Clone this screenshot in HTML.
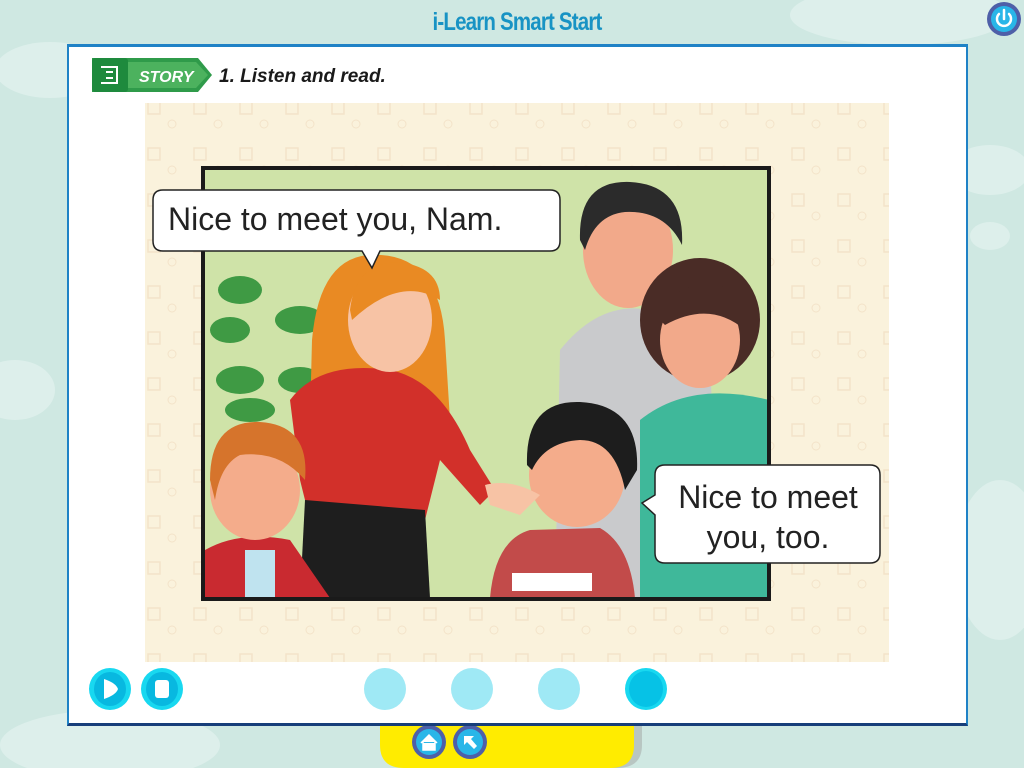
<!DOCTYPE html>
<html><head><meta charset="utf-8"><style>
html,body{margin:0;padding:0;width:1024px;height:768px;overflow:hidden;background:#cfe8e2;font-family:"Liberation Sans",sans-serif}
.abs{position:absolute}
</style></head><body>
<div class="abs" style="left:0;top:0;width:1024px;height:768px">
<svg width="1024" height="768" class="abs" style="left:0;top:0">
<ellipse cx="50" cy="70" rx="55" ry="28" fill="#ddefeb"/>
<ellipse cx="15" cy="390" rx="40" ry="30" fill="#ddefeb"/>
<ellipse cx="990" cy="170" rx="40" ry="25" fill="#ddefeb"/>
<ellipse cx="990" cy="236" rx="20" ry="14" fill="#ddefeb"/>
<ellipse cx="1000" cy="560" rx="45" ry="80" fill="#ddefeb"/>
<ellipse cx="900" cy="15" rx="110" ry="30" fill="#ddefeb"/>
<ellipse cx="110" cy="745" rx="110" ry="35" fill="#ddefeb"/>
<!-- yellow tab -->
<path d="M388 718 L642 718 L642 745 Q642 768 617 768 L412 768 Q388 768 388 745Z" fill="#b8c6c2"/>
<path d="M380 718 L634 718 L634 745 Q634 768 610 768 L404 768 Q380 768 380 745Z" fill="#ffec00"/>
<circle cx="429" cy="742" r="17" fill="#4e5fa8"/><circle cx="429" cy="742" r="13" fill="#29b6e8"/>
<path d="M421 743 L429 735 L437 743 M423 742 V750 H435 V742" fill="#fff" stroke="#fff" stroke-width="1.5"/>
<circle cx="470" cy="742" r="17" fill="#4e5fa8"/><circle cx="470" cy="742" r="13" fill="#29b6e8"/>
<path d="M464 736 L474 736 L471 739 L477 746 L474 749 L467 742 L464 745Z" fill="#fff"/>
<!-- power -->
<circle cx="1004" cy="19" r="17" fill="#4e5fa8"/><circle cx="1004" cy="19" r="13" fill="#29b6e8"/>
<path d="M999 14 A7 7 0 1 0 1009 14" fill="none" stroke="#fff" stroke-width="2.5" stroke-linecap="round"/>
<line x1="1004" y1="10" x2="1004" y2="19" stroke="#fff" stroke-width="2.5" stroke-linecap="round"/>
</svg>
<div class="abs" style="left:0;top:8px;width:1034px;text-align:center;font-weight:bold;font-size:25px;color:#1893c4;letter-spacing:-1px;transform:scaleX(0.82)">i-Learn Smart Start</div>
<!-- panel -->
<div class="abs" style="left:67px;top:44px;width:897px;height:676px;background:#fff;border-top:3px solid #1f82c6;border-left:2px solid #1f82c6;border-right:2px solid #1f82c6;border-bottom:3px solid #173e7a"></div>
<svg width="1024" height="768" class="abs" style="left:0;top:0">
<defs><pattern id="pt" width="46" height="46" patternUnits="userSpaceOnUse"><rect x="10" y="10" width="12" height="12" fill="none" stroke="#f3e3c9" stroke-width="1.5"/><circle cx="34" cy="32" r="4" fill="none" stroke="#f3e3c9"/></pattern></defs>
<!-- story badge -->
<path d="M92 58 H198 L212 75 L198 92 H92 Z" fill="#2f9b4a"/>
<path d="M128 62 H196 L208 75 L196 88 H128 Z" fill="#4cb25e"/>
<rect x="92" y="58" width="36" height="34" rx="3" fill="#1e8a3d"/>
<path d="M101 67 H117 V83 H101 M106 72 H113 M106 78 H113" fill="none" stroke="#fff" stroke-width="2"/>
<text x="139" y="82" font-family="Liberation Sans" font-weight="bold" font-style="italic" font-size="16" fill="#fff">STORY</text>
<text x="219" y="82" font-family="Liberation Sans" font-weight="bold" font-style="italic" font-size="19" fill="#1a1a1a">1. Listen and read.</text>
<!-- image bg -->
<rect x="145" y="103" width="744" height="559" fill="#faf2dc"/>
<rect x="145" y="103" width="744" height="559" fill="url(#pt)"/>
<!-- comic -->
<rect x="203" y="168" width="566" height="431" fill="#cfe3a8"/>
<g fill="#3f9a44"><ellipse cx="240" cy="290" rx="22" ry="14"/><ellipse cx="230" cy="330" rx="20" ry="13"/><ellipse cx="300" cy="320" rx="25" ry="14"/><ellipse cx="240" cy="380" rx="24" ry="14"/><ellipse cx="300" cy="380" rx="22" ry="13"/><ellipse cx="250" cy="410" rx="25" ry="12"/></g>
<path d="M555 598 L560 350 Q600 300 650 310 Q700 320 710 360 L720 598Z" fill="#c9cacc"/>
<ellipse cx="628" cy="250" rx="45" ry="58" fill="#f2a98a"/>
<path d="M580 240 Q578 180 630 182 Q685 185 682 245 Q665 210 625 212 Q595 215 585 250Z" fill="#2b2b2b"/>
<path d="M640 598 L640 420 Q690 380 769 400 V598Z" fill="#3fb89a"/>
<ellipse cx="700" cy="320" rx="60" ry="62" fill="#4a2c26"/>
<ellipse cx="700" cy="340" rx="40" ry="48" fill="#f2a98a"/>
<path d="M660 320 Q670 280 720 285 Q750 300 745 330 Q710 300 665 325Z" fill="#4a2c26"/>
<path d="M312 340 Q320 250 380 255 Q440 258 445 340 L450 420 L310 420Z" fill="#e98a23"/>
<path d="M290 400 Q320 360 390 370 Q440 380 470 450 L495 490 L480 505 L440 460 L425 520 L310 520 L300 480 Z" fill="#d2302a"/>
<path d="M305 500 L425 510 L430 598 L300 598Z" fill="#1e1e1e"/>
<ellipse cx="390" cy="320" rx="42" ry="52" fill="#f7c3a5"/>
<path d="M350 310 Q355 265 395 262 Q440 265 440 300 Q400 275 352 320Z" fill="#e98a23"/>
<path d="M205 598 L205 550 Q240 530 290 540 L330 598Z" fill="#c92a30"/>
<rect x="245" y="550" width="30" height="48" fill="#bfe3ef"/>
<ellipse cx="255" cy="490" rx="45" ry="50" fill="#f4ac8b"/>
<path d="M210 480 Q210 420 260 422 Q310 425 305 480 Q280 450 240 455 Q220 465 215 500Z" fill="#d6742c"/>
<path d="M490 598 Q495 540 530 530 L600 528 Q630 545 635 598Z" fill="#c24b4a"/>
<rect x="512" y="573" width="80" height="18" fill="#fff"/>
<ellipse cx="577" cy="475" rx="48" ry="52" fill="#f4ac8b"/>
<path d="M527 465 Q525 400 580 402 Q640 405 637 470 L625 490 Q615 440 580 440 Q545 442 532 470Z" fill="#1d1d1d"/>
<path d="M485 485 Q510 478 540 495 L520 515 L490 505Z" fill="#f7c3a5"/>
<rect x="203" y="168" width="566" height="431" fill="none" stroke="#1a1a1a" stroke-width="4"/>
<path d="M163 190 H550 Q560 190 560 200 V241 Q560 251 550 251 H380 L372 268 L362 251 H163 Q153 251 153 241 V200 Q153 190 163 190Z" fill="#fff" stroke="#222" stroke-width="1.5"/>
<text x="168" y="230" font-family="Liberation Sans" font-size="32" fill="#222">Nice to meet you, Nam.</text>
<path d="M665 465 H870 Q880 465 880 475 V553 Q880 563 870 563 H665 Q655 563 655 553 V515 L642 503 L655 495 V475 Q655 465 665 465Z" fill="#fff" stroke="#222" stroke-width="1.5"/>
<text x="768" y="508" text-anchor="middle" font-family="Liberation Sans" font-size="32" fill="#222">Nice to meet</text>
<text x="768" y="548" text-anchor="middle" font-family="Liberation Sans" font-size="32" fill="#222">you, too.</text>
<ellipse cx="110" cy="689" rx="21" ry="21" fill="#18d8f0"/><ellipse cx="110" cy="689" rx="16" ry="17" fill="#08b8e0"/>
<path d="M104 679 Q116 683 118 689 Q116 695 104 699Z" fill="#fff"/>
<ellipse cx="162" cy="689" rx="21" ry="21" fill="#18d8f0"/><ellipse cx="162" cy="689" rx="16" ry="17" fill="#08b8e0"/>
<rect x="155" y="680" width="14" height="18" rx="3" fill="#fff"/>
<ellipse cx="385" cy="689" rx="21" ry="21" fill="#9fe9f5"/>
<ellipse cx="472" cy="689" rx="21" ry="21" fill="#9fe9f5"/>
<ellipse cx="559" cy="689" rx="21" ry="21" fill="#9fe9f5"/>
<ellipse cx="646" cy="689" rx="21" ry="21" fill="#18d8f0"/><ellipse cx="646" cy="689" rx="17" ry="18" fill="#06c2e6"/>
</svg>
</div>
</body></html>
